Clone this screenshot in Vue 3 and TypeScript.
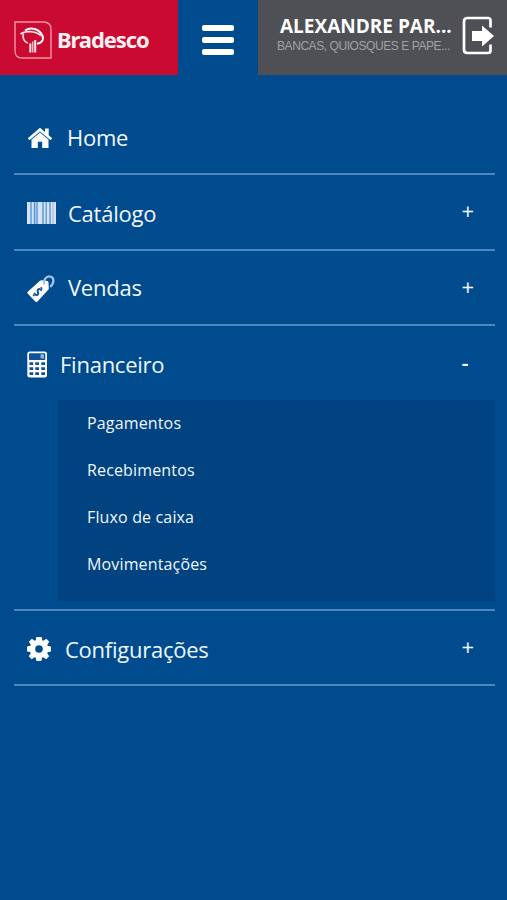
<script setup lang="ts">
import { ref } from 'vue'

interface MenuItem {
  id: string
  label: string
  children?: string[]
}

const items: MenuItem[] = [
  { id: 'home', label: 'Home' },
  { id: 'catalogo', label: 'Catálogo', children: [] },
  { id: 'vendas', label: 'Vendas', children: [] },
  {
    id: 'financeiro',
    label: 'Financeiro',
    children: ['Pagamentos', 'Recebimentos', 'Fluxo de caixa', 'Movimentações'],
  },
  { id: 'config', label: 'Configurações', children: [] },
]

const open = ref('financeiro')

function toggle(item: MenuItem) {
  if (item.children) open.value = open.value === item.id ? '' : item.id
}
</script>

<template>
  <div class="page">
    <header class="top">
      <div class="brand">
        <svg class="brand-mark" width="38" height="38" viewBox="0 0 38 38" fill="none">
          <path d="M1 1h28.500q7.500 0 7.500 7.500V37H8.500Q1 37 1 29.500z" stroke="#ee94a4" stroke-width="1.400" />
          <path d="M11 9.500C17 5.500 25 8 28.300 14.500c2 4.500-1 7.700-5.300 8.300" stroke="#fff" stroke-width="2" />
          <path d="M6.500 13C11 9.500 21 9.500 27 14.500" stroke="#ffe6ea" stroke-width="1.700" />
          <path d="M9.500 12.500c-1.500 4 .5 8.300 4.500 9.800" stroke="#fbd0d8" stroke-width="1.700" />
          <path d="M16.300 22.500v9M21.200 19v12.500" stroke="#ffe9ec" stroke-width="2" />
          <path d="M18.700 20.500v11" stroke="#f7b5c0" stroke-width="1.600" />
        </svg>
        <span class="brand-name">Bradesco</span>
      </div>
      <button class="burger" aria-label="Menu">
        <i></i><i></i><i></i>
      </button>
      <div class="user">
        <div class="user-text">
          <strong class="user-name">ALEXANDRE PAR...</strong>
          <span class="user-sub">BANCAS, QUIOSQUES E PAPE...</span>
        </div>
        <svg class="exit" width="33" height="40" viewBox="0 0 33 40">
          <path d="M29.500 11.500V4.500Q29.500 2 27 2H6.500Q3 2 3 5.500V33.500Q3 37 6.500 37H27Q29.500 37 29.500 34.500V28.500" fill="none" stroke="#fff" stroke-width="2.700" />
          <path d="M11 15h10V9.500L33 20 21 30.500v-5.500H11z" fill="#fff" />
        </svg>
      </div>
    </header>

    <nav class="menu">
      <section v-for="item in items" :key="item.id" class="entry" :class="item.id">
        <div class="row" @click="toggle(item)">
          <svg v-if="item.id === 'home'" class="icon" width="26" height="22" viewBox="0 0 26 22" fill="#fff">
            <path d="M13 .8 .8 11.200l1.700 2L13 4.400l10.500 8.800 1.700-2-3.500-3V1.500h-3.700v3.600z" />
            <path d="M13 5.500 4.500 12.700V21h6.300v-6.300h4.400V21h6.300v-8.300z" />
          </svg>
          <svg v-else-if="item.id === 'catalogo'" class="icon" width="30" height="22" viewBox="0 0 30 22">
            <path fill="#9fc6ee" d="M0 0h29v22H0z" />
            <path fill="#d3e4f6" d="M0 0h3v22H0zM5 0h1.500v22H5zM11 0h4v22h-4zM17 0h1.500v22H17zM20 0h2v22h-2zM24 0h5v22h-5z" />
            <path fill="#5c93cc" d="M3.500 0h1v22h-1zM7 0h1v22H7zM9.500 0h1v22h-1zM15.500 0h1v22h-1zM18.700 0h1v22h-1zM22.500 0h1v22h-1z" />
            <path fill="#b7a9db" d="M25.500 0h1v22h-1z" />
          </svg>
          <svg v-else-if="item.id === 'vendas'" class="icon" width="30" height="30" viewBox="0 0 30 30">
            <path fill="#fff" d="M1 17.500 13 6.800q1-.8 2.200-.6l5 .7q1.200.2 1.300 1.500l.3 6q0 1-.8 1.700L10.500 27.500q-1.200 1-2.200 0L.8 19.700q-1-1.200.2-2.200z" />
            <path fill="none" stroke="#a5c5e8" stroke-width="2.200" d="M17.500 10.500C15.500 6 19.500 2 23 2.500c4.500.7 4.500 6.500.3 10.500" />
            <path fill="none" stroke="#165599" stroke-width="2" d="M7 19q2.500 3.500 4 1.300c1-1.800-1.400-3-.1-4.600q1.800-1.600 4 1M7.200 20.900l-1 1M14 14.500l1-1" />
          </svg>
          <svg v-else-if="item.id === 'financeiro'" class="icon" width="21" height="27" viewBox="0 0 21 27">
            <rect x=".3" y=".5" width="19.700" height="26" rx="2.500" fill="#fff" />
            <rect x="2" y="2.300" width="16.300" height="6.700" rx=".8" fill="#0f5298" />
            <path d="M13.500 3.300h3.500v4.200h-3.500z" fill="#8fb4dd" />
            <path d="M2.500 11.300h3.700v2.800H2.500zM8.300 11.300h3.700v2.800H8.300zM14.300 11.300H18v2.800h-3.700zM2.500 16.200h3.700V19H2.500zM8.300 16.200h3.700V19H8.300zM14.300 16.200H18V19h-3.700zM2.500 21.200h3.700v2.800H2.500zM8.300 21.200h3.700v2.800H8.300zM14.300 21.200H18v2.800h-3.700z" fill="#0f5298" />
          </svg>
          <svg v-else class="icon" width="26" height="26" viewBox="0 0 26 26">
            <path fill="#fff" fill-rule="evenodd" d="M9.300 1h5.400l.7 3.400 1 .4 2.900-2 3 3-2 2.900.5 1.200 3.200.6v5l-3.300.7-.5 1.100 2 3-3.100 3-2.900-2-1.200.5-.6 3.200h-5l-.6-3.300-1.200-.5-2.900 2-3-3 2-2.900-.5-1.200L0 15.500v-5l3.300-.7.5-1.100-2-2.900 3-3 2.900 2 1.100-.5zM12 9.200a3.800 3.800 0 1 0 0 7.600 3.800 3.800 0 0 0 0-7.600z" />
          </svg>
          <span class="label">{{ item.label }}</span>
          <span v-if="item.children" class="sign" :class="{ minus: open === item.id }">{{ open === item.id ? '-' : '+' }}</span>
        </div>
        <ul v-if="open === item.id && item.children?.length" class="sub">
          <li v-for="child in item.children" :key="child">{{ child }}</li>
        </ul>
      </section>
    </nav>
  </div>
</template>

<style>
body {
  background: #004b8e;
}
</style>

<style scoped>
.page {
  min-height: 900px;
  background: #004b8e;
  color: #f1f7ff;
  font-family: 'Open Sans', sans-serif;
}
.top {
  display: flex;
  height: 75px;
}
.brand {
  width: 178px;
  box-sizing: border-box;
  padding: 4px 0 0 14px;
  display: flex;
  align-items: center;
  background: #cb0a31;
}
.brand-name {
  margin: 0 0 1px 5px;
  color: #fff0f2;
  font-family: 'Noto Sans', 'Open Sans', sans-serif;
  font-size: 22px;
  font-weight: 700;
  letter-spacing: -1.100px;
}
.burger {
  width: 80px;
  padding: 5px 0 0;
  border: 0;
  background: none;
  display: flex;
  flex-direction: column;
  align-items: center;
  justify-content: center;
  gap: 6px;
}
.burger i {
  width: 32px;
  height: 6px;
  border-radius: 2px;
  background: #fff;
}
.user {
  flex: 1;
  display: flex;
  background: #4f5055;
}
.user-text {
  width: 203px;
  padding-top: 13px;
  display: flex;
  flex-direction: column;
  white-space: nowrap;
}
.user-name {
  padding-left: 22px;
  color: #fff;
  font-size: 19px;
  line-height: 26px;
}
.user-sub {
  padding-left: 19px;
  color: #a0a1a5;
  font-family: 'Liberation Sans', Arial, sans-serif;
  font-size: 12px;
  line-height: 14px;
  letter-spacing: -0.43px;
}
.exit {
  margin-top: 16px;
}
.menu {
  padding: 24.500px 12.500px 0 14px;
}
.entry {
  border-bottom: 2px solid #4d87c2;
}
.row {
  height: 73.500px;
  box-sizing: border-box;
  display: flex;
  align-items: center;
  padding: 0 0 2px 13px;
}
.icon {
  margin-top: 4px;
}
.label {
  padding-top: 3px;
  font-size: 22px;
  line-height: 30px;
  letter-spacing: -0.25px;
}
.sign {
  margin: 0 19px 1px auto;
  width: 14px;
  font-size: 22px;
  line-height: 30px;
}
.sign.minus {
  margin-bottom: 0;
  font-weight: 600;
}
.home .label { margin-left: 14px; }
.home .icon { margin-top: 5px; }
.catalogo .label { margin-left: 11px; padding-top: 5px; }
.vendas .label { margin-left: 11px; padding-top: 1px; }
.vendas .icon { margin-top: 6px; }
.financeiro .label { margin-left: 12px; padding-top: 5px; }
.financeiro .icon { margin-top: 6px; }
.config .label { margin-left: 12px; padding-top: 5px; }
.config .icon { margin-top: 6px; }
.sub {
  height: 201px;
  box-sizing: border-box;
  margin: 0 0 8px 44px;
  padding: 0 0 0 29px;
  list-style: none;
  background: #004380;
}
.sub li {
  height: 47.300px;
  line-height: 47.300px;
  font-size: 16px;
  letter-spacing: 0.15px;
}
</style>
